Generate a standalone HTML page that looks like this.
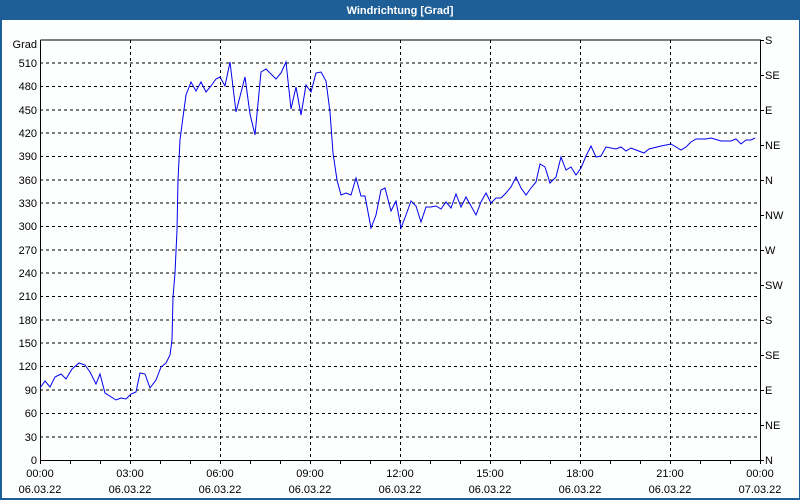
<!DOCTYPE html>
<html><head><meta charset="utf-8"><style>
html,body{margin:0;padding:0;width:800px;height:500px;overflow:hidden;background:#fff}
svg{display:block}
text{font-family:"Liberation Sans",sans-serif;font-size:11px;fill:#000}
</style></head><body>
<svg width="800" height="500" viewBox="0 0 800 500">
<rect x="0" y="0" width="800" height="500" fill="#fdfefe"/>
<rect x="0" y="0" width="800" height="20" fill="#1f5f97"/>
<rect x="0" y="0" width="2" height="500" fill="#1f5f97"/>
<rect x="0" y="498" width="800" height="2" fill="#1f5f97"/>
<rect x="799" y="0" width="1" height="500" fill="#1f5f97"/>
<text x="400" y="14" text-anchor="middle" style="fill:#fff;font-weight:bold">Windrichtung [Grad]</text>
<g stroke="#000" stroke-width="1" stroke-dasharray="3,3" fill="none" shape-rendering="crispEdges">
<path d="M40 437H760M40 413.5H760M40 390H760M40 366.5H760M40 343H760M40 320H760M40 296.5H760M40 273H760M40 250H760M40 226.5H760M40 203H760M40 180H760M40 156.5H760M40 133H760M40 110H760M40 86.5H760M40 63H760"/>
<path d="M130.5 40V460M220.5 40V460M310.5 40V460M400.5 40V460M490.5 40V460M580.5 40V460M670.5 40V460"/>
</g>
<g stroke="#000" stroke-width="1" fill="none" shape-rendering="crispEdges">
<path d="M40.5 40V460.5H760.5V40H40.5"/>
<path d="M70.5 460v4M100.5 460v4M130.5 460v4M160.5 460v4M190.5 460v4M220.5 460v4M250.5 460v4M280.5 460v4M310.5 460v4M340.5 460v4M370.5 460v4M400.5 460v4M430.5 460v4M460.5 460v4M490.5 460v4M520.5 460v4M550.5 460v4M580.5 460v4M610.5 460v4M640.5 460v4M670.5 460v4M700.5 460v4M730.5 460v4M760.5 460v4M40.5 460v4"/>
<path d="M760 40.5h4M760 75.5h4M760 110.5h4M760 145.5h4M760 180.5h4M760 215.5h4M760 250.5h4M760 285.5h4M760 320.5h4M760 355.5h4M760 390.5h4M760 425.5h4M760 460.5h4"/>
</g>
<polyline fill="none" stroke="#0000ee" stroke-width="1" points="40,388 45,381 50,387 55,377 61,374 66,379 72,369 79,363 85,365 90,372 96,384 100,374 105,393 116,400 121,398 126,399 131,394 136,392 140,373 145,374 150,388 156,380 161,367 166,363 170,355 172,340 173,297 175,273 177,230 178,180 180,140 183,117 186,95 191,82 196,91 201,82 206,92 211,86 216,79 220,77 225,86 230,62 236,112 245,77 250,114 255,135 261,72 266,69 276,79 281,73 286,62 291,109 296,87 301,115 306,85 311,92 316,73 321,72 326,81 330,112 333,153 337,180 341,195 346,193 351,195 356,178 361,196 365,196 371,228 376,215 381,190 385,188 391,211 396,201 401,228 406,215 411,201 416,206 421,222 426,207 431,207 436,206 441,209 446,202 451,208 456,194 461,207 466,197 476,215 481,202 486,193 491,203 496,198 501,198 506,193 511,187 516,177 521,188 526,195 531,188 536,182 540,164 545,167 550,183 556,177 561,157 566,170 571,167 576,175 581,168 586,156 591,146 596,157 601,156 606,147 616,149 621,147 626,151 631,148 644,153 649,149 661,146 671,144 681,150 686,147 691,142 696,139 706,139 711,138 721,141 731,141 736,139 741,144 746,140 751,140 755,138"/>
<g text-anchor="end">
<text x="37" y="48">Grad</text>
<text x="37" y="67">510</text><text x="37" y="90">480</text><text x="37" y="114">450</text><text x="37" y="137">420</text><text x="37" y="160">390</text><text x="37" y="184">360</text><text x="37" y="207">330</text><text x="37" y="230">300</text><text x="37" y="254">270</text><text x="37" y="277">240</text><text x="37" y="300">210</text><text x="37" y="324">180</text><text x="37" y="347">150</text><text x="37" y="370">120</text><text x="37" y="394">90</text><text x="37" y="417">60</text><text x="37" y="441">30</text><text x="37" y="464">0</text>
</g>
<g>
<text x="765" y="44">S</text><text x="765" y="79">SE</text><text x="765" y="114">E</text><text x="765" y="149">NE</text><text x="765" y="184">N</text><text x="765" y="219">NW</text><text x="765" y="254">W</text><text x="765" y="289">SW</text><text x="765" y="324">S</text><text x="765" y="359">SE</text><text x="765" y="394">E</text><text x="765" y="429">NE</text><text x="765" y="464">N</text>
</g>
<g text-anchor="middle">
<text x="40" y="477">00:00</text><text x="40" y="493">06.03.22</text>
<text x="130" y="477">03:00</text><text x="130" y="493">06.03.22</text>
<text x="220" y="477">06:00</text><text x="220" y="493">06.03.22</text>
<text x="310" y="477">09:00</text><text x="310" y="493">06.03.22</text>
<text x="400" y="477">12:00</text><text x="400" y="493">06.03.22</text>
<text x="490" y="477">15:00</text><text x="490" y="493">06.03.22</text>
<text x="580" y="477">18:00</text><text x="580" y="493">06.03.22</text>
<text x="670" y="477">21:00</text><text x="670" y="493">06.03.22</text>
<text x="760" y="477">00:00</text><text x="760" y="493">07.03.22</text>
</g>
</svg>
</body></html>
